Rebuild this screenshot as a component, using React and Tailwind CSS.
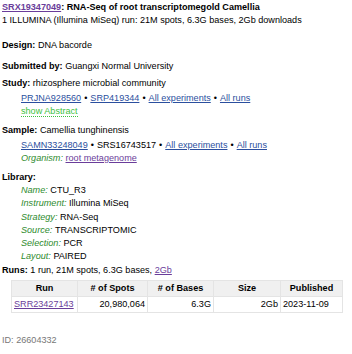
import React from 'react';

const font = { fontFamily: '"Liberation Sans", Arial, sans-serif' };

const Dot = () => <span className="mx-[3px]">•</span>;

const Label = ({ children }) => <span className="italic text-[#2e8b2e]">{children}: </span>;

export default function App() {
    const runs = [
        { run: 'SRR23427143', spots: '20,980,064', bases: '6.3G', size: '2Gb', published: '2023-11-09' },
    ];

    return (
        <div className="bg-white w-[352px] h-[354px] px-[2px] pt-[1px] text-[9.1px] leading-[13.2px] text-black" style={font}>
            <div>
                <a className="text-[#6a3d9a] underline font-bold">SRX19347049</a>
                <b>: RNA-Seq of root transcriptomegold Camellia</b>
            </div>
            <div>1 ILLUMINA (Illumina MiSeq) run: 21M spots, 6.3G bases, 2Gb downloads</div>

            <div className="mt-[12px]"><b>Design:</b> DNA bacorde</div>

            <div className="mt-[7px]"><b>Submitted by:</b> Guangxi Normal University</div>

            <div className="mt-[4px]">
                <div><b>Study:</b> rhizosphere microbial community</div>
                <div className="pl-[19px] mt-[2px]">
                    <a className="text-[#2b4f9e] underline">PRJNA928560</a>
                    <Dot />
                    <a className="text-[#2b4f9e] underline">SRP419344</a>
                    <Dot />
                    <a className="text-[#2b4f9e] underline">All experiments</a>
                    <Dot />
                    <a className="text-[#2b4f9e] underline">All runs</a>
                </div>
                <div className="pl-[19px]">
                    <span className="text-[#3ec23e] border-b border-dotted border-[#3ec23e]">show Abstract</span>
                </div>
            </div>

            <div className="mt-[6px]">
                <div><b>Sample:</b> Camellia tunghinensis</div>
                <div className="pl-[19px] mt-[1px]">
                    <a className="text-[#2b4f9e] underline">SAMN33248049</a>
                    <Dot />
                    <span>SRS16743517</span>
                    <Dot />
                    <a className="text-[#2b4f9e] underline">All experiments</a>
                    <Dot />
                    <a className="text-[#2b4f9e] underline">All runs</a>
                </div>
                <div className="pl-[19px]">
                    <Label>Organism</Label>
                    <a className="text-[#6a3d9a] underline">root metagenome</a>
                </div>
            </div>

            <div className="mt-[6px]">
                <div><b>Library:</b></div>
                <div className="pl-[19px]">
                    <div><Label>Name</Label>CTU_R3</div>
                    <div><Label>Instrument</Label>Illumina MiSeq</div>
                    <div><Label>Strategy</Label>RNA-Seq</div>
                    <div><Label>Source</Label>TRANSCRIPTOMIC</div>
                    <div><Label>Selection</Label>PCR</div>
                    <div><Label>Layout</Label>PAIRED</div>
                </div>
            </div>

            <div className="mt-[1px]">
                <b>Runs:</b> 1 run, 21M spots, 6.3G bases, <a className="text-[#6a3d9a] underline">2Gb</a>
            </div>

            <table className="ml-[9px] mt-[2px] w-[332px] border-collapse border border-[#e4e4e4]">
                <thead>
                    <tr className="bg-[#f0f0f0]">
                        <th className="border border-[#e4e4e4] font-bold text-center py-[1px] w-[66px]">Run</th>
                        <th className="border border-[#e4e4e4] font-bold text-center py-[1px] w-[70px]"># of Spots</th>
                        <th className="border border-[#e4e4e4] font-bold text-center py-[1px] w-[66px]"># of Bases</th>
                        <th className="border border-[#e4e4e4] font-bold text-center py-[1px] w-[67px]">Size</th>
                        <th className="border border-[#e4e4e4] font-bold text-center py-[1px]">Published</th>
                    </tr>
                </thead>
                <tbody>
                    {runs.map((r) => (
                        <tr key={r.run}>
                            <td className="border border-[#e4e4e4] px-[2px] py-[1px]">
                                <a className="text-[#6a3d9a] underline">{r.run}</a>
                            </td>
                            <td className="border border-[#e4e4e4] px-[2px] py-[1px] text-right">{r.spots}</td>
                            <td className="border border-[#e4e4e4] px-[2px] py-[1px] text-right">{r.bases}</td>
                            <td className="border border-[#e4e4e4] px-[2px] py-[1px] text-right">{r.size}</td>
                            <td className="border border-[#e4e4e4] px-[2px] py-[1px]">{r.published}</td>
                        </tr>
                    ))}
                </tbody>
            </table>

            <div className="mt-[21px] text-[#777]">ID: 26604332</div>
        </div>
    );
}
